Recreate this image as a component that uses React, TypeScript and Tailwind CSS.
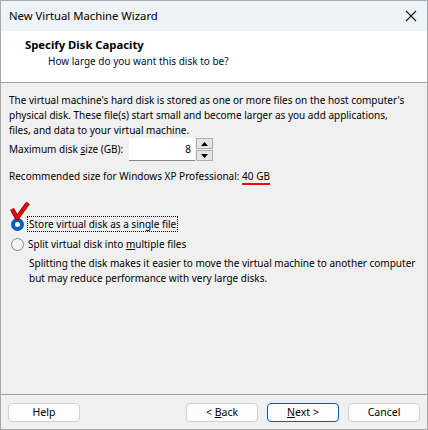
import React from 'react';

const Radio = ({ checked }: { checked?: boolean }) =>
  checked ? (
    <span className="w-[13px] h-[13px] rounded-full bg-[#005fb8] flex items-center justify-center shrink-0">
      <span className="w-[5px] h-[5px] rounded-full bg-white" />
    </span>
  ) : (
    <span className="inline-block w-[13px] h-[13px] rounded-full border border-[#858585] bg-[#f5f5f5] shrink-0" />
  );

const Btn = ({ children, primary }: { children: React.ReactNode; primary?: boolean }) => (
  <button
    className={
      primary
        ? 'w-[72px] h-[19px] rounded-[4px] border border-[#005fb8] bg-[#fdfdfd] text-[10.5px] leading-none text-black'
        : 'w-[72px] h-[19px] rounded-[4px] border border-[#d0d0d0] bg-[#fdfdfd] text-[10.5px] leading-none text-black'
    }
  >
    {children}
  </button>
);

export default function App() {
  return (
    <div className="w-[428px] h-[430px] flex flex-col border border-[#a9a9a9] bg-[#f0f0f0] text-[10px] text-black font-['Noto_Sans',sans-serif] whitespace-nowrap">
      {/* title bar */}
      <div className="h-[30px] shrink-0 bg-[#eef3f9] flex items-center justify-between pl-[8px] pr-[10px]">
        <span className="text-[11.3px]">New Virtual Machine Wizard</span>
        <svg width="12" height="12" viewBox="0 0 12 12">
          <path d="M1 1 L11 11 M11 1 L1 11" stroke="#1a1a1a" strokeWidth="1.1" />
        </svg>
      </div>

      {/* header */}
      <div className="h-[52px] shrink-0 bg-white border-b border-[#a0a0a0] pl-[24px] pt-[6px]">
        <div className="font-bold text-[11.3px] leading-[16px]">Specify Disk Capacity</div>
        <div className="pl-[23px] leading-[16px] text-[#0a0a3a]">How large do you want this disk to be?</div>
      </div>

      {/* body */}
      <div className="flex-1 px-[8px] pt-[10px]">
        <p className="leading-[15px]">
          The virtual machine's hard disk is stored as one or more files on the host computer's
          <br />
          physical disk. These file(s) start small and become larger as you add applications,
          <br />
          files, and data to your virtual machine.
        </p>

        <div className="flex items-center">
          <span className="w-[120px]">
            Maximum disk <u>s</u>ize (GB):
          </span>
          <div className="w-[66px] h-[23px] bg-white border-b border-[#8a8a8a] flex items-center justify-end pr-[4px]">
            8
          </div>
          <div className="flex flex-col gap-[1px] ml-[1px]">
            <div className="w-[17px] h-[11px] border border-[#adadad] bg-[#e5e5e5] flex items-center justify-center">
              <svg width="7" height="4" viewBox="0 0 7 4">
                <path d="M0 4 L3.5 0 L7 4 Z" fill="#000" />
              </svg>
            </div>
            <div className="w-[17px] h-[11px] border border-[#adadad] bg-[#e5e5e5] flex items-center justify-center">
              <svg width="7" height="4" viewBox="0 0 7 4">
                <path d="M0 0 L7 0 L3.5 4 Z" fill="#000" />
              </svg>
            </div>
          </div>
        </div>

        <div className="mt-[8px] leading-[15px]">
          Recommended size for Windows XP Professional:{' '}
          <span className="underline decoration-[#ff0000] decoration-2 underline-offset-[3px]">40 GB</span>
        </div>

        <div className="relative mt-[32px]">
          <svg className="absolute left-[0px] -top-[15px]" width="22" height="22" viewBox="0 0 22 22">
            <path d="M3 8 L8 17 L19 2" fill="none" stroke="#8b0000" strokeWidth="4.5" strokeLinejoin="round" />
            <path d="M3 8 L8 17 L19 2" fill="none" stroke="#ff0000" strokeWidth="2.5" strokeLinejoin="round" />
          </svg>
          <div className="flex items-center gap-[3px] pl-[2px]">
            <Radio checked />
            <span className="border border-dotted border-black px-[1px] leading-[14px]">
              Store virtual disk as a single file
            </span>
          </div>
        </div>

        <div className="flex items-center gap-[4px] pl-[2px] mt-[5px]">
          <Radio />
          <span className="leading-[15px]">
            Split virtual disk into <u>m</u>ultiple files
          </span>
        </div>

        <p className="pl-[20px] mt-[4px] leading-[15px]">
          Splitting the disk makes it easier to move the virtual machine to another computer
          <br />
          but may reduce performance with very large disks.
        </p>
      </div>

      {/* footer */}
      <div className="h-[35px] shrink-0 border-t border-[#a0a0a0] flex items-center px-[7px]">
        <Btn>Help</Btn>
        <div className="flex-1" />
        <div className="flex gap-[9px]">
          <Btn>
            &lt; <u>B</u>ack
          </Btn>
          <Btn primary>
            <u>N</u>ext &gt;
          </Btn>
          <Btn>Cancel</Btn>
        </div>
      </div>
    </div>
  );
}
